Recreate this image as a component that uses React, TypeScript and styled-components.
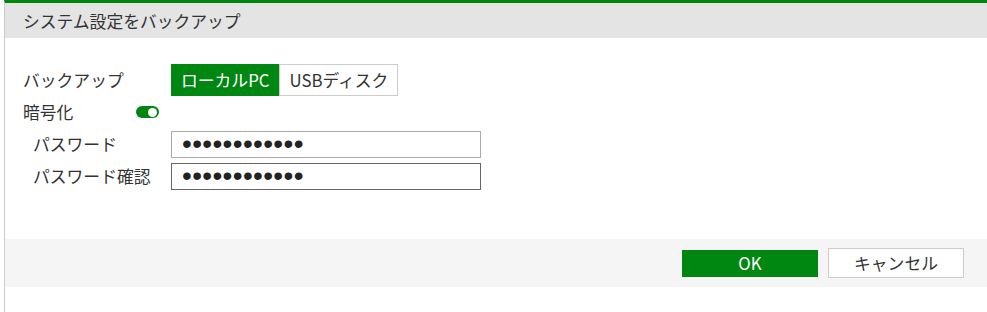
import React, { useState } from 'react';
import styled, { createGlobalStyle } from 'styled-components';

const GlobalStyle = createGlobalStyle`
  * { box-sizing: border-box; }
  html, body { margin: 0; padding: 0; background: #fff; }
  body {
    font-family: "Noto Sans CJK JP", "Noto Sans", sans-serif;
    color: #333;
  }
`;

const App = () => {
  const [target, setTarget] = useState<'local' | 'usb'>('local');
  const [encrypt, setEncrypt] = useState(true);

  return (
    <>
      <GlobalStyle />
      <Page>
        <Dialog>
          <Header>システム設定をバックアップ</Header>
          <Body>
            <Row>
              <Label>バックアップ</Label>
              <Segment>
                {TARGETS.map(({ id, title }) => (
                  <SegmentButton key={id} active={target === id} onClick={() => setTarget(id)}>
                    {title}
                  </SegmentButton>
                ))}
              </Segment>
            </Row>
            <ToggleRow>
              <ToggleLabel>暗号化</ToggleLabel>
              <Toggle on={encrypt} onClick={() => setEncrypt(!encrypt)} />
            </ToggleRow>
            <SubRow>
              <SubLabel>パスワード</SubLabel>
              <PasswordInput type="password" defaultValue="abcdefghijkl" />
            </SubRow>
            <SubRow>
              <SubLabel>パスワード確認</SubLabel>
              <PasswordInput type="password" defaultValue="abcdefghijkl" focused />
            </SubRow>
          </Body>
          <Footer>
            <OkButton>OK</OkButton>
            <CancelButton>キャンセル</CancelButton>
          </Footer>
        </Dialog>
      </Page>
    </>
  );
};

export default App;

const TARGETS: { id: 'local' | 'usb'; title: string }[] = [
  { id: 'local', title: 'ローカルPC' },
  { id: 'usb', title: 'USBディスク' },
];

const Page = styled.div`
  width: 987px;
  height: 312px;
  padding-left: 4px;
  overflow: hidden;
`;

const Dialog = styled.div`
  width: 1000px;
  height: 312px;
  border-top: 3px solid #00860f;
  border-left: 1px solid #cccccc;
  display: flex;
  flex-direction: column;
`;

const Header = styled.div`
  height: 35px;
  background: #e4e4e4;
  padding-left: 18px;
  display: flex;
  align-items: center;
  font-size: 16.8px;
  color: #333;
`;

const Body = styled.div`
  height: 201px;
  padding: 26px 0 0 18px;
  display: flex;
  flex-direction: column;
`;

const Row = styled.div`
  display: flex;
  align-items: center;
  height: 32px;
`;

const Label = styled.div`
  width: 148px;
  font-size: 16.8px;
`;

const Segment = styled.div`
  display: flex;
`;

const SegmentButton = styled.button<{ active: boolean }>`
  height: 32px;
  padding: 0 9px;
  font-family: inherit;
  font-size: 16.8px;
  border: 1px solid ${({ active }) => (active ? '#008712' : '#cccccc')};
  background: ${({ active }) => (active ? '#008712' : '#ffffff')};
  color: ${({ active }) => (active ? '#ffffff' : '#333333')};
  cursor: pointer;
`;

const ToggleRow = styled.div`
  display: flex;
  align-items: center;
  height: 32px;
`;

const ToggleLabel = styled.div`
  width: 113px;
  font-size: 16.8px;
`;

const Toggle = styled.div<{ on: boolean }>`
  width: 23px;
  height: 12px;
  border-radius: 6px;
  background: ${({ on }) => (on ? '#008712' : '#bbbbbb')};
  position: relative;
  cursor: pointer;

  &::after {
    content: '';
    position: absolute;
    top: 1.5px;
    left: ${({ on }) => (on ? '12px' : '2px')};
    width: 9px;
    height: 9px;
    border-radius: 50%;
    background: #fff;
  }
`;

const SubRow = styled.div`
  display: flex;
  align-items: center;
  height: 32px;
`;

const SubLabel = styled.div`
  width: 148px;
  padding-left: 10px;
  font-size: 16.8px;
`;

const PasswordInput = styled.input<{ focused?: boolean }>`
  width: 310px;
  height: 27px;
  padding: 0 10px;
  font-family: "Liberation Sans", sans-serif;
  font-size: 28px;
  line-height: 25px;
  letter-spacing: 0.35px;
  color: #222;
  border: 1px solid ${({ focused }) => (focused ? '#666666' : '#aaaaaa')};
  outline: none;
`;

const Footer = styled.div`
  height: 48px;
  background: #f5f5f5;
  display: flex;
  align-items: center;
  justify-content: flex-start;
  padding-left: 677px;
  gap: 10px;
`;

const OkButton = styled.button`
  width: 136px;
  height: 27px;
  border: none;
  background: #008712;
  color: #fff;
  font-family: inherit;
  font-size: 16.8px;
  cursor: pointer;
`;

const CancelButton = styled.button`
  width: 136px;
  height: 30px;
  border: 1px solid #cccccc;
  background: #fff;
  color: #333;
  font-family: inherit;
  font-size: 16.8px;
  cursor: pointer;
`;
